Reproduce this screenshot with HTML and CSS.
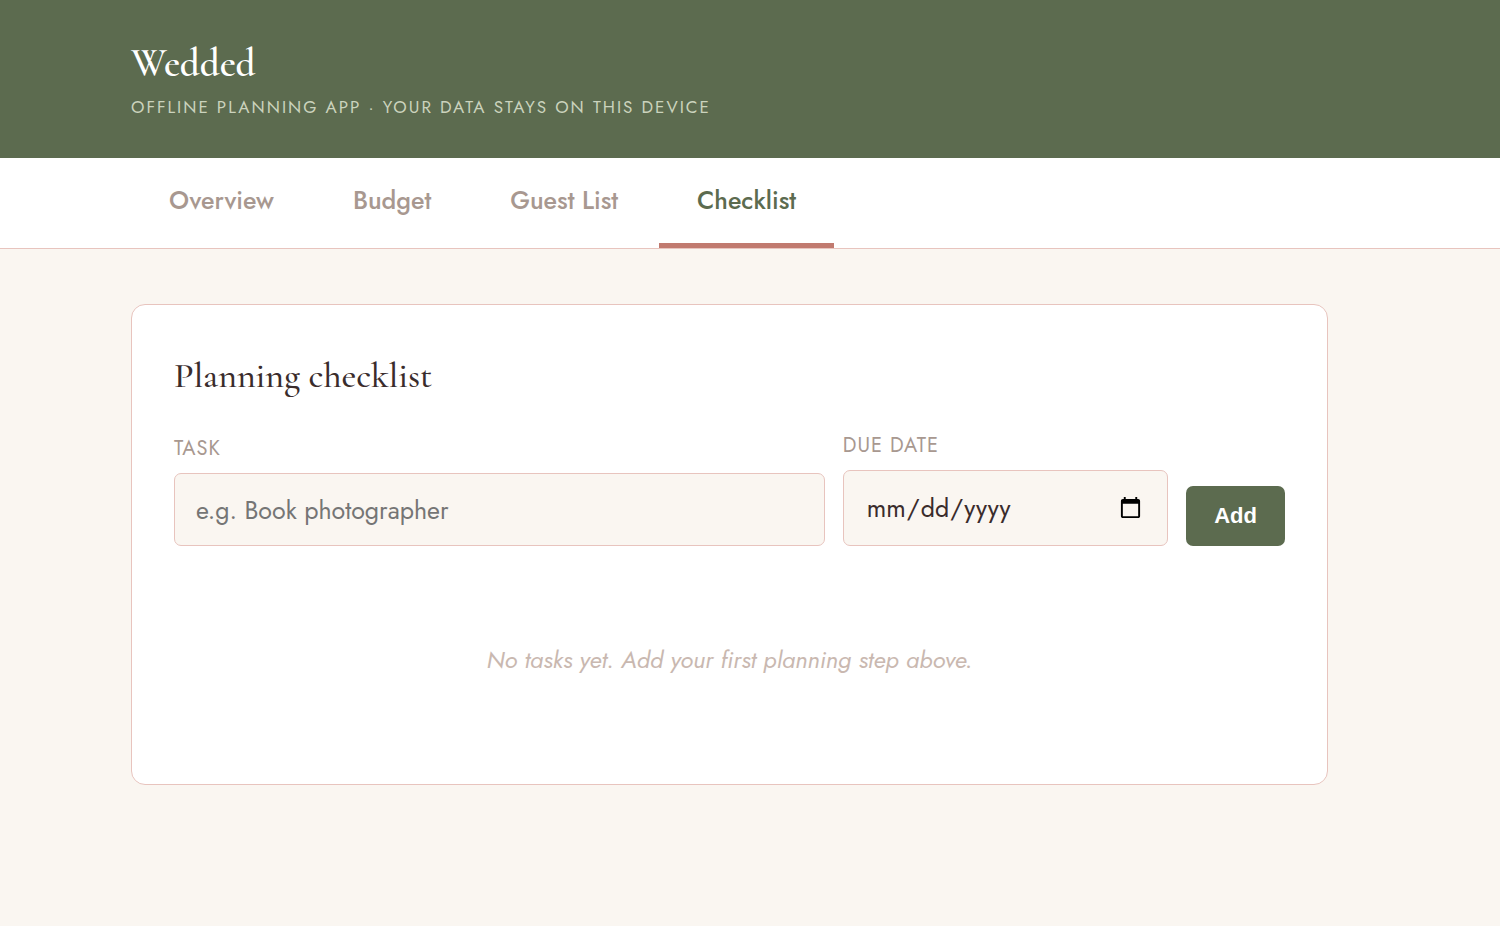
FILE: index.html
```html
<!DOCTYPE html>
<html lang="en">
<head>
<meta charset="utf-8">
<meta name="viewport" content="width=device-width, initial-scale=1">
<title>Wedded</title>
<link rel="stylesheet" href="styles.css">
</head>
<body>
<header class="masthead">
  <h1 class="brand">Wedded</h1>
  <p class="tagline">Offline planning app · Your data stays on this device</p>
</header>
<nav class="tabs" aria-label="Sections">
  <button class="tab" type="button">Overview</button>
  <button class="tab" type="button">Budget</button>
  <button class="tab" type="button">Guest List</button>
  <button class="tab tab-active" type="button" aria-current="page">Checklist</button>
</nav>
<main class="content">
  <section class="card">
    <h2 class="card-title">Planning checklist</h2>
    <form class="task-form">
      <div class="field">
        <label class="label" for="task">Task</label>
        <input class="input" id="task" type="text" placeholder="e.g. Book photographer">
      </div>
      <div class="field">
        <label class="label" for="due">Due date</label>
        <input class="input input-date" id="due" type="date">
      </div>
      <button class="add" type="button">Add</button>
    </form>
    <p class="empty">No tasks yet. Add your first planning step above.</p>
  </section>
</main>
</body>
</html>
```
FILE: styles.css
```css
:root {
  --green: #5c6b4f;
  --rose: #c17a6f;
  --blush: #e8c4be;
  --cream: #faf6f1;
  --ink: #3a2c2c;
  --muted: #a89890;
  --sans: Jost, Lato, sans-serif;
  --serif: "Cormorant Garamond", "Liberation Serif", serif;
}

* {
  box-sizing: border-box;
}

body {
  margin: 0;
  background: var(--cream);
  color: var(--ink);
  font-family: var(--sans);
}

.masthead,
.tabs,
.content {
  padding-left: 131px;
  padding-right: 172px;
}

.masthead {
  padding-top: 42px;
  padding-bottom: 38px;
  background: var(--green);
}

.brand {
  margin: 0 0 8px;
  color: #fff;
  font: 600 39px/44px var(--serif);
}

.tagline {
  margin: 0;
  color: #cbd3bd;
  font-size: 17px;
  line-height: 26px;
  letter-spacing: 2px;
  text-transform: uppercase;
}

.tabs {
  display: flex;
  gap: 3px;
  background: #fff;
  border-bottom: 1px solid var(--blush);
}

.tab {
  padding: 25px 38px;
  border: 0;
  border-bottom: 5px solid transparent;
  background: none;
  color: var(--muted);
  font: 500 25px/35px var(--sans);
}

.tab-active {
  color: var(--green);
  border-bottom-color: var(--rose);
}

.content {
  padding-top: 55px;
  padding-bottom: 55px;
}

.card {
  padding: 49px 42px 42px;
  background: #fff;
  border: 1px solid var(--blush);
  border-radius: 14px;
}

.card-title {
  margin: 0 0 33px;
  font: 500 36px/44px var(--serif);
}

.task-form {
  display: grid;
  grid-template-columns: 2fr 1fr auto;
  gap: 18px;
  align-items: end;
}

.field {
  display: flex;
  flex-direction: column;
  gap: 9px;
  min-width: 0;
}

.label {
  color: var(--muted);
  font-size: 20px;
  line-height: 30px;
  letter-spacing: 1px;
  text-transform: uppercase;
}

.input {
  width: 100%;
  height: 73px;
  padding: 0 21px;
  border: 1px solid var(--blush);
  border-radius: 7px;
  background: var(--cream);
  color: var(--ink);
  font: 400 25px/36px var(--sans);
}

.input::placeholder {
  color: #757575;
}

.input-date {
  height: 76px;
  padding: 0 22px;
}

.add {
  height: 60px;
  padding: 0 28px;
  border: 0;
  border-radius: 7px;
  background: var(--green);
  color: #fff;
  font: 700 22px/26px "Liberation Sans", sans-serif;
}

.empty {
  margin: 0;
  padding: 96px 0 64px;
  color: #c9b8b0;
  font-size: 24px;
  font-style: italic;
  line-height: 36px;
  text-align: center;
}
```
